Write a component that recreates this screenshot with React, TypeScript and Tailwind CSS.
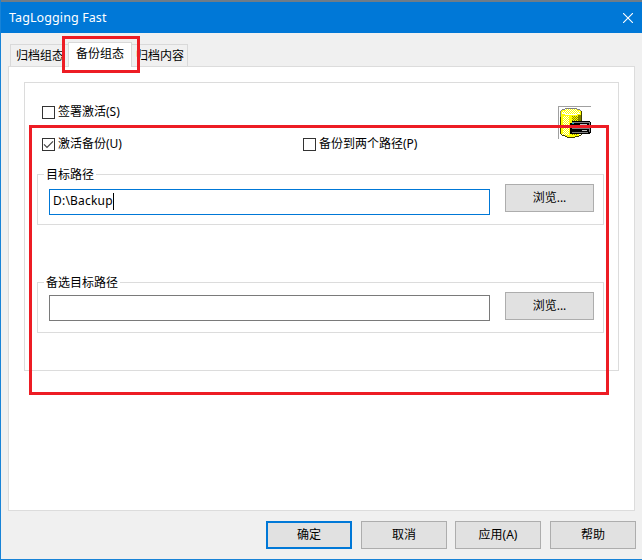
import type { ReactNode } from 'react'

function CheckBox({ label, checked = false }: { label: string; checked?: boolean }) {
  return (
    <label className="flex h-[18px] items-center gap-[3px] whitespace-nowrap">
      <span className="flex h-[13px] w-[13px] items-center justify-center border border-[#333] bg-white">
        {checked && (
          <svg width="11" height="11" viewBox="0 0 11 11" fill="none" stroke="#444" strokeWidth="1.2">
            <path d="M1 5.3 L4 8.3 L10 2.3" />
          </svg>
        )}
      </span>
      <span>{label}</span>
    </label>
  )
}

function Button({ children, className = '' }: { children: ReactNode; className?: string }) {
  return (
    <button
      type="button"
      className={`flex h-[28px] shrink-0 items-center justify-center bg-[#e1e1e1] text-black ${className}`}
    >
      {children}
    </button>
  )
}

interface PathGroupProps {
  title: string
  value?: string
  focused?: boolean
}

function PathGroup({ title, value = '', focused = false }: PathGroupProps) {
  return (
    <fieldset className="h-[59px] w-[567px] border border-[#dcdcdc]">
      <legend className="ml-[6px] h-[17px] px-[2px] leading-[17px]">{title}</legend>
      <div className="flex gap-[15px] pl-[11px]">
        <div
          className={`flex h-[26px] w-[441px] items-center border bg-white pl-[3px] ${
            focused ? 'mt-[6px] border-[#0078d7]' : 'mt-[4px] border-[#7a7a7a]'
          }`}
        >
          <span className="-mt-[2px] tracking-[0.2px]">{value}</span>
          {focused && <span className="-mt-[1px] h-[17px] w-px bg-black" />}
        </div>
        <Button className="mt-[1px] w-[89px] border border-[#adadad]">浏览...</Button>
      </div>
    </fieldset>
  )
}

// 2px checkerboard pixels, used for the dithered shading of the cylinder
function dither(x0: number, x1: number, y0: number, y1: number) {
  let d = ''
  for (let y = y0; y < y1; y++) {
    for (let x = x0; x < x1; x++) {
      if ((x + y) % 2 === 0) d += `M${x} ${y}h1v1h-1z`
    }
  }
  return d
}

function ArchiveIcon() {
  return (
    <svg width="33" height="33" viewBox="0 0 33 33" shapeRendering="crispEdges">
      <path d="M0 0h33v1H1v32H0z" fill="#a0a0a0" />
      {/* cylinder */}
      <path d="M3 5h1V4h3V3h12v1h3v1h1v23h-2v2h-4v1H8v-1H5v-2H3z" fill="#ffff00" />
      <path d={dither(7, 19, 3, 8) + dither(4, 7, 5, 8) + dither(19, 22, 5, 7) + dither(5, 11, 10, 29)} fill="#fff" />
      <path d={dither(14, 20, 10, 29)} fill="#808000" />
      <path d="M20 9h3v19h-3z" fill="#808000" />
      <path d="M4 7h3v1h12V7h3v1h-3v1H7V8H4z" fill="#fff" />
      <path d="M7 2h12v1H7zM4 3h3v1H4zM19 3h3v1h-3zM3 4h1v1H3zM22 4h1v1h-1zM2 5h1v6H2z" fill="#808080" />
      <path d="M2 11h1v17H2zM3 28h1v1H3zM4 29h3v1H4zM7 30h2v1H7zM9 31h8v1H9zM17 30h4v1h-4zM21 29h2v1h-2zM23 5h1v24h-1z" fill="#404000" />
      {/* tape drive */}
      <path d="M14 15h18v1h1v11h-1v1H12V17h2z" fill="#000" />
      <path d="M14 16h17v1H14zM14 22h17v1H14zM14 26h16v1H14z" fill="#808080" />
      <path d="M31 16h1v10h-1z" fill="#808080" />
      <path d="M14 17h2v1h-2z" fill="#00c0c0" />
      <path d="M22 18h7v1h-7zM24 24h5v1h-5z" fill="#c0c0c0" />
    </svg>
  )
}

export default function App() {
  return (
    <div className="relative flex h-[560px] w-[642px] flex-col overflow-hidden border-b border-l border-[#1883d7] bg-[#f0f0f0] font-['Noto_Sans','Noto_Sans_CJK_SC',sans-serif] text-[12px] leading-[18px] text-black">
      <header className="flex h-[33px] shrink-0 items-center justify-between border-t-2 border-[#6e7c88] bg-[#0078d7] pl-[8px] pr-[9px] text-white">
        <h1 className="text-[12.5px] tracking-[0.1px]">TagLogging Fast</h1>
        <svg width="10" height="10" viewBox="0 0 10 10" stroke="#fff" strokeWidth="1.1">
          <path d="M0 0 L10 10 M10 0 L0 10" />
        </svg>
      </header>

      <nav className="z-10 ml-[9px] mt-[9px] flex h-[25px] shrink-0 items-end whitespace-nowrap">
        <div className="mb-px h-[22px] w-[58px] border border-r-0 border-b-0 border-[#d9d9d9] pl-[5px] leading-[22px]">归档组态</div>
        <div className="h-[25px] w-[64px] border border-b-0 border-[#d9d9d9] bg-white pl-[7px] leading-[22px]">备份组态</div>
        <div className="mb-px h-[22px] w-[56px] border border-l-0 border-b-0 border-[#d9d9d9] pl-[4px] leading-[22px]">归档内容</div>
      </nav>

      <main className="-mt-px ml-[7px] h-[445px] w-[627px] shrink-0 border border-[#dcdcdc] bg-white pl-[15px] pt-[15px]">
        <section className="h-[289px] w-[595px] border border-[#dcdcdc] pl-[12px] pt-[20px]">
          <div className="flex h-[63px] justify-between pl-[5px] pr-[27px]">
            <div className="flex flex-col gap-[14px]">
              <CheckBox label="签署激活(S)" />
              <div className="flex">
                <div className="w-[261px]">
                  <CheckBox label="激活备份(U)" checked />
                </div>
                <CheckBox label="备份到两个路径(P)" />
              </div>
            </div>
            <div className="mt-[3px]">
              <ArchiveIcon />
            </div>
          </div>
          <div className="flex flex-col gap-[49px]">
            <PathGroup title="目标路径" value="D:\Backup" focused />
            <PathGroup title="备选目标路径" />
          </div>
        </section>
      </main>

      <footer className="ml-[265px] mt-[10px] flex">
        <Button className="mr-[9px] w-[86px] border-2 border-[#0078d7]">确定</Button>
        <Button className="mr-[8px] w-[86px] border border-[#adadad]">取消</Button>
        <Button className="mr-[9px] w-[86px] border border-[#adadad]">应用(A)</Button>
        <Button className="w-[86px] border border-[#adadad]">帮助</Button>
      </footer>

      {/* highlight frames over the dialog */}
      <div className="absolute left-[61px] top-[36px] z-20 h-[37px] w-[78px] border-3 border-[#ed1c24]" />
      <div className="absolute left-[28px] top-[125px] z-20 h-[270px] w-[580px] border-3 border-[#ed1c24]" />
    </div>
  )
}
